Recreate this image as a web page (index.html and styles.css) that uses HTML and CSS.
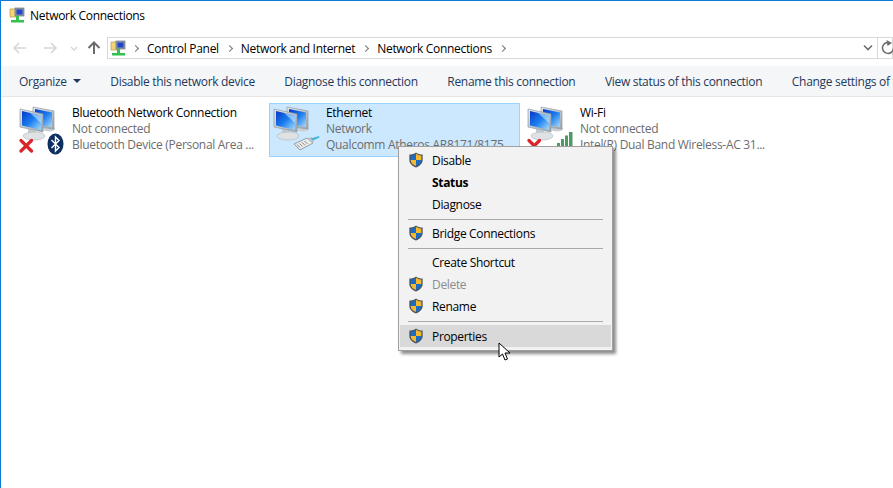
FILE: index.html
```html
<!doctype html>
<html>
<head>
<meta charset="utf-8">
<title>Network Connections</title>
<link rel="stylesheet" href="styles.css">
</head>
<body>
<svg class="defs" width="0" height="0">
  <defs>
    <linearGradient id="screen" x1="0" y1="0" x2="1" y2="1">
      <stop offset="0" stop-color="#0838c8"/>
      <stop offset="0.5" stop-color="#1a7cf0"/>
      <stop offset="1" stop-color="#a9dcf8"/>
    </linearGradient>
    <linearGradient id="bezel" x1="0" y1="0" x2="1" y2="1">
      <stop offset="0" stop-color="#e4e9ec"/>
      <stop offset="1" stop-color="#9aa5ac"/>
    </linearGradient>
    <symbol id="computers" viewBox="0 0 44 40">
      <ellipse cx="33" cy="25" rx="6" ry="2.500" fill="#c9ced2"/>
      <path d="M17 3 L38 7 L38 25 L17 22 Z" fill="url(#bezel)" stroke="#8f9aa3" stroke-width=".7"/>
      <path d="M19 5 L36 8.500 L36 23 L19 20.500 Z" fill="url(#screen)"/>
      <path d="M12 25 L20 27 L20 31 L12 30 Z" fill="#c4cbd0"/>
      <ellipse cx="18" cy="32" rx="11" ry="4" fill="#dfe2e4" stroke="#aeb5ba" stroke-width=".6"/>
      <path d="M4 5 L27 10 L27 28 L4 23 Z" fill="url(#bezel)" stroke="#8f9aa3" stroke-width=".7"/>
      <path d="M6 7 L25 11.500 L25 26 L6 21.500 Z" fill="url(#screen)"/>
      <path d="M14 9 L25 11.500 L25 19 Z" fill="#d6effc" opacity=".55"/>
    </symbol>
    <symbol id="shield" viewBox="0 0 16 18">
      <path d="M8 .5 C10 2 12.500 2.800 15.500 2.800 L15.500 9 C15.500 13 12 15.800 8 17.500 C4 15.800 .5 13 .5 9 L.5 2.800 C3.500 2.800 6 2 8 .5 Z" fill="#4c5560"/>
      <path d="M8 2 L8 9 L2 9 L2 4 C4.200 4 6.200 3.300 8 2 Z" fill="#1a6cc4"/>
      <path d="M8 2 C9.800 3.300 11.800 4 14 4 L14 9 L8 9 Z" fill="#f6b92c"/>
      <path d="M2 9 L8 9 L8 15.800 C4.800 14.400 2 12.300 2 9 Z" fill="#f6b92c"/>
      <path d="M8 9 L14 9 C14 12.300 11.200 14.400 8 15.800 Z" fill="#1a6cc4"/>
    </symbol>
    <symbol id="redx" viewBox="0 0 15 15">
      <path d="M2 2.500 L12.500 13 M12.500 2.500 L2 13" stroke="#d8262c" stroke-width="3.200" stroke-linecap="round"/>
    </symbol>
    <symbol id="crumb-net" viewBox="0 0 17 17">
      <path d="M1 2 L6 2 L7 3.500 L9 3.500 L9 10 L1 10 Z" fill="#f2d479" stroke="#b99a45" stroke-width=".7"/>
      <rect x="6" y="1" width="9" height="8" fill="#8d99a8" stroke="#6c7683" stroke-width=".7"/>
      <rect x="7.500" y="2.500" width="6" height="5" fill="#2146c8"/>
      <rect x="7" y="9" width="3" height="4" fill="#33c24d"/>
      <rect x="2" y="13" width="13" height="2.500" fill="#33c24d"/>
    </symbol>
  </defs>
</svg>

<div class="window">
  <div class="titlebar">
    <svg class="icon16"><use href="#crumb-net"/></svg>
    <span>Network Connections</span>
  </div>

  <div class="navbar">
    <svg class="nav-arrows" width="106" height="22" viewBox="0 0 106 22">
      <path d="M13 11 H25 M18 6 L13 11 L18 16" stroke="#d6d6d6" stroke-width="1.600" fill="none"/>
      <path d="M55 11 H43 M50 6 L55 11 L50 16" stroke="#d6d6d6" stroke-width="1.600" fill="none"/>
      <path d="M70 10 L73 13 L76 10" stroke="#d6d6d6" stroke-width="1.300" fill="none"/>
      <path d="M93 17 V6 M87.500 11 L93 5.500 L98.500 11" stroke="#6d6d6d" stroke-width="2" fill="none"/>
    </svg>
    <div class="addressbar">
      <svg class="icon16 crumb-icon"><use href="#crumb-net"/></svg>
      <span class="chev"></span><span class="crumb">Control Panel</span>
      <span class="chev"></span><span class="crumb">Network and Internet</span>
      <span class="chev"></span><span class="crumb">Network Connections</span>
      <span class="chev"></span>
      <span class="spacer"></span>
      <svg class="drop" width="12" height="8" viewBox="0 0 12 8"><path d="M2 1.500 L6 5.500 L10 1.500" stroke="#6d6d6d" stroke-width="1.600" fill="none"/></svg>
      <span class="divider"></span>
      <svg class="refresh" width="16" height="16" viewBox="0 0 16 16"><path d="M10 2.800 A5.500 5.500 0 1 0 13.500 8" stroke="#6d6d6d" stroke-width="1.500" fill="none"/><path d="M5.500 0 L11 3 L6.500 6 Z" fill="#6d6d6d" transform="translate(1 0)"/></svg>
    </div>
  </div>

  <div class="toolbar">
    <span class="tool organize">Organize<i class="caret"></i></span>
    <span class="tool">Disable this network device</span>
    <span class="tool">Diagnose this connection</span>
    <span class="tool">Rename this connection</span>
    <span class="tool">View status of this connection</span>
    <span class="tool">Change settings of this connection</span>
  </div>

  <div class="items">
    <div class="item">
      <div class="item-icon">
        <svg class="computers"><use href="#computers"/></svg>
        <svg class="badge-x"><use href="#redx"/></svg>
        <svg class="badge-bt" width="17" height="22" viewBox="0 0 17 22">
          <ellipse cx="8.500" cy="11" rx="8" ry="10.500" fill="#0d3060"/>
          <path d="M4.500 7 L12 14.500 L8.500 18 L8.500 4 L12 7.500 L4.500 15" stroke="#fff" stroke-width="1.400" fill="none"/>
        </svg>
      </div>
      <div class="item-text">
        <div class="name">Bluetooth Network Connection</div>
        <div class="sub">Not connected</div>
        <div class="sub">Bluetooth Device (Personal Area ...</div>
      </div>
    </div>

    <div class="item selected">
      <div class="item-icon">
        <svg class="computers"><use href="#computers"/></svg>
        <svg class="badge-plug" width="27" height="16" viewBox="0 0 27 16">
          <path d="M1 9 L14 3 L20 8 L7 15 Z" fill="#e8ebed" stroke="#7f8a8f" stroke-width=".8"/>
          <path d="M4 9.500 L7 12.500 M6.500 8.500 L9.500 11.500 M9 7.300 L12 10.300 M11.500 6 L14.500 9" stroke="#7d7f70" stroke-width=".9"/>
          <path d="M14 3 L19 2 L21 6 L20 8 Z" fill="#b9c2c7"/>
          <path d="M18 3.500 L26 1 L26.500 2.500 L20 5.500 Z" fill="#3fb4d8"/>
        </svg>
      </div>
      <div class="item-text">
        <div class="name">Ethernet</div>
        <div class="sub">Network</div>
        <div class="sub">Qualcomm Atheros AR8171/8175 ...</div>
      </div>
    </div>

    <div class="item">
      <div class="item-icon">
        <svg class="computers"><use href="#computers"/></svg>
        <svg class="badge-x"><use href="#redx"/></svg>
        <svg class="badge-bars" width="16" height="18" viewBox="0 0 16 18">
          <path d="M0 18 V11 H3 V18 Z M4 18 V7 H7 V18 Z M8 18 V3.500 H11 V18 Z M12 18 V0 H15.500 V18 Z" fill="#4d9a63"/>
        </svg>
      </div>
      <div class="item-text">
        <div class="name">Wi-Fi</div>
        <div class="sub">Not connected</div>
        <div class="sub">Intel(R) Dual Band Wireless-AC 31...</div>
      </div>
    </div>
  </div>

  <div class="menu">
    <div class="row"><svg class="shield"><use href="#shield"/></svg>Disable</div>
    <div class="row bold">Status</div>
    <div class="row">Diagnose</div>
    <div class="sep"></div>
    <div class="row"><svg class="shield"><use href="#shield"/></svg>Bridge Connections</div>
    <div class="sep"></div>
    <div class="row">Create Shortcut</div>
    <div class="row off"><svg class="shield"><use href="#shield"/></svg>Delete</div>
    <div class="row"><svg class="shield"><use href="#shield"/></svg>Rename</div>
    <div class="sep last"></div>
    <div class="row hover"><svg class="shield"><use href="#shield"/></svg>Properties</div>
  </div>

  <svg class="cursor" width="14" height="20" viewBox="0 0 14 20">
    <path d="M1 1 L1 15 L4.500 12 L7 18 L9.500 17 L7 11 L12 11 Z" fill="#fff" stroke="#000" stroke-width="1"/>
  </svg>
</div>
</body>
</html>
```

FILE: styles.css
```css
html, body {
  margin: 0;
  padding: 0;
  background: #fff;
}
body {
  font-family: "Open Sans", "Noto Sans", sans-serif;
  font-size: 12px;
  letter-spacing: -0.3px;
  overflow: hidden;
}
.defs {
  position: absolute;
}
.window {
  position: relative;
  height: 487px;
  border-top: 1px solid #0a7ad6;
  border-left: 1px solid #0a7ad6;
  overflow: hidden;
}
.icon16 {
  width: 17px;
  height: 17px;
  flex: none;
}

.titlebar {
  height: 29px;
  display: flex;
  align-items: center;
  gap: 4px;
  padding-left: 8px;
  color: #000;
}

.navbar {
  height: 22px;
  margin-top: 7px;
  display: flex;
  align-items: center;
}
.nav-arrows {
  flex: none;
}
.addressbar {
  flex: 1;
  height: 20px;
  display: flex;
  align-items: center;
  border: 1px solid #d9d9d9;
  color: #000;
}
.crumb-icon {
  margin: 0 -2px 0 2px;
}
.chev {
  width: 4px;
  height: 4px;
  margin: 0 9px 0 8px;
  border-top: 1.500px solid #777;
  border-right: 1.500px solid #777;
  transform: rotate(45deg);
}
.spacer {
  flex: 1;
}
.drop {
  margin-right: 3px;
}
.divider {
  width: 1px;
  height: 20px;
  background: #d9d9d9;
  margin-right: 2px;
}
.refresh {
  flex: none;
  margin-right: -4px;
}

.toolbar {
  height: 30px;
  margin-top: 7px;
  background: #f5f6f7;
  border-bottom: 1px solid #e6e6e6;
  display: flex;
  align-items: center;
  gap: 29.5px;
  padding-left: 18px;
  color: #1e395b;
  white-space: nowrap;
}
.organize {
  display: flex;
  align-items: center;
  gap: 6px;
}
.caret {
  width: 0;
  height: 0;
  border-left: 4px solid transparent;
  border-right: 4px solid transparent;
  border-top: 4px solid #1e395b;
}

.items {
  display: flex;
  gap: 3px;
  padding: 6px 0 0 14px;
}
.item {
  width: 251px;
  height: 54px;
  box-sizing: border-box;
  border: 1px solid transparent;
  display: flex;
  color: #6d6d6d;
  white-space: nowrap;
}
.selected {
  background: #cce8ff;
  border-color: #99d1ff;
}
.item-icon {
  position: relative;
  width: 56px;
  flex: none;
}
.computers {
  width: 44px;
  height: 40px;
  display: block;
}
.badge-x {
  position: absolute;
  left: 3px;
  top: 34px;
  width: 15px;
  height: 15px;
}
.badge-bt {
  position: absolute;
  left: 31px;
  top: 29px;
}
.badge-plug {
  position: absolute;
  left: 23px;
  top: 31px;
}
.badge-bars {
  position: absolute;
  left: 33px;
  top: 28px;
}
.item-text {
  padding-top: 1px;
  line-height: 16px;
}
.name {
  color: #000;
}

.menu {
  position: absolute;
  left: 397px;
  top: 145px;
  width: 211px;
  padding: 2px 1px 3px;
  background: #f2f2f2;
  border: 1px solid #a0a0a0;
  box-shadow: 3px 3px 3px rgba(0, 0, 0, 0.45);
  color: #000;
  letter-spacing: -0.33px;
}
.row {
  height: 22px;
  display: flex;
  align-items: center;
  padding-left: 32px;
  position: relative;
}
.shield {
  position: absolute;
  left: 8px;
  top: 3px;
  width: 16px;
  height: 16px;
}
.bold {
  font-weight: 700;
}
.off {
  color: #8c8c8c;
}
.hover {
  background: #d9d9d9;
}
.sep {
  height: 1px;
  margin: 4px 8px 2px 8px;
  background: #a9a9a9;
}
.sep.last {
  margin-bottom: 3px;
}

.cursor {
  position: absolute;
  left: 497px;
  top: 341px;
}
```
